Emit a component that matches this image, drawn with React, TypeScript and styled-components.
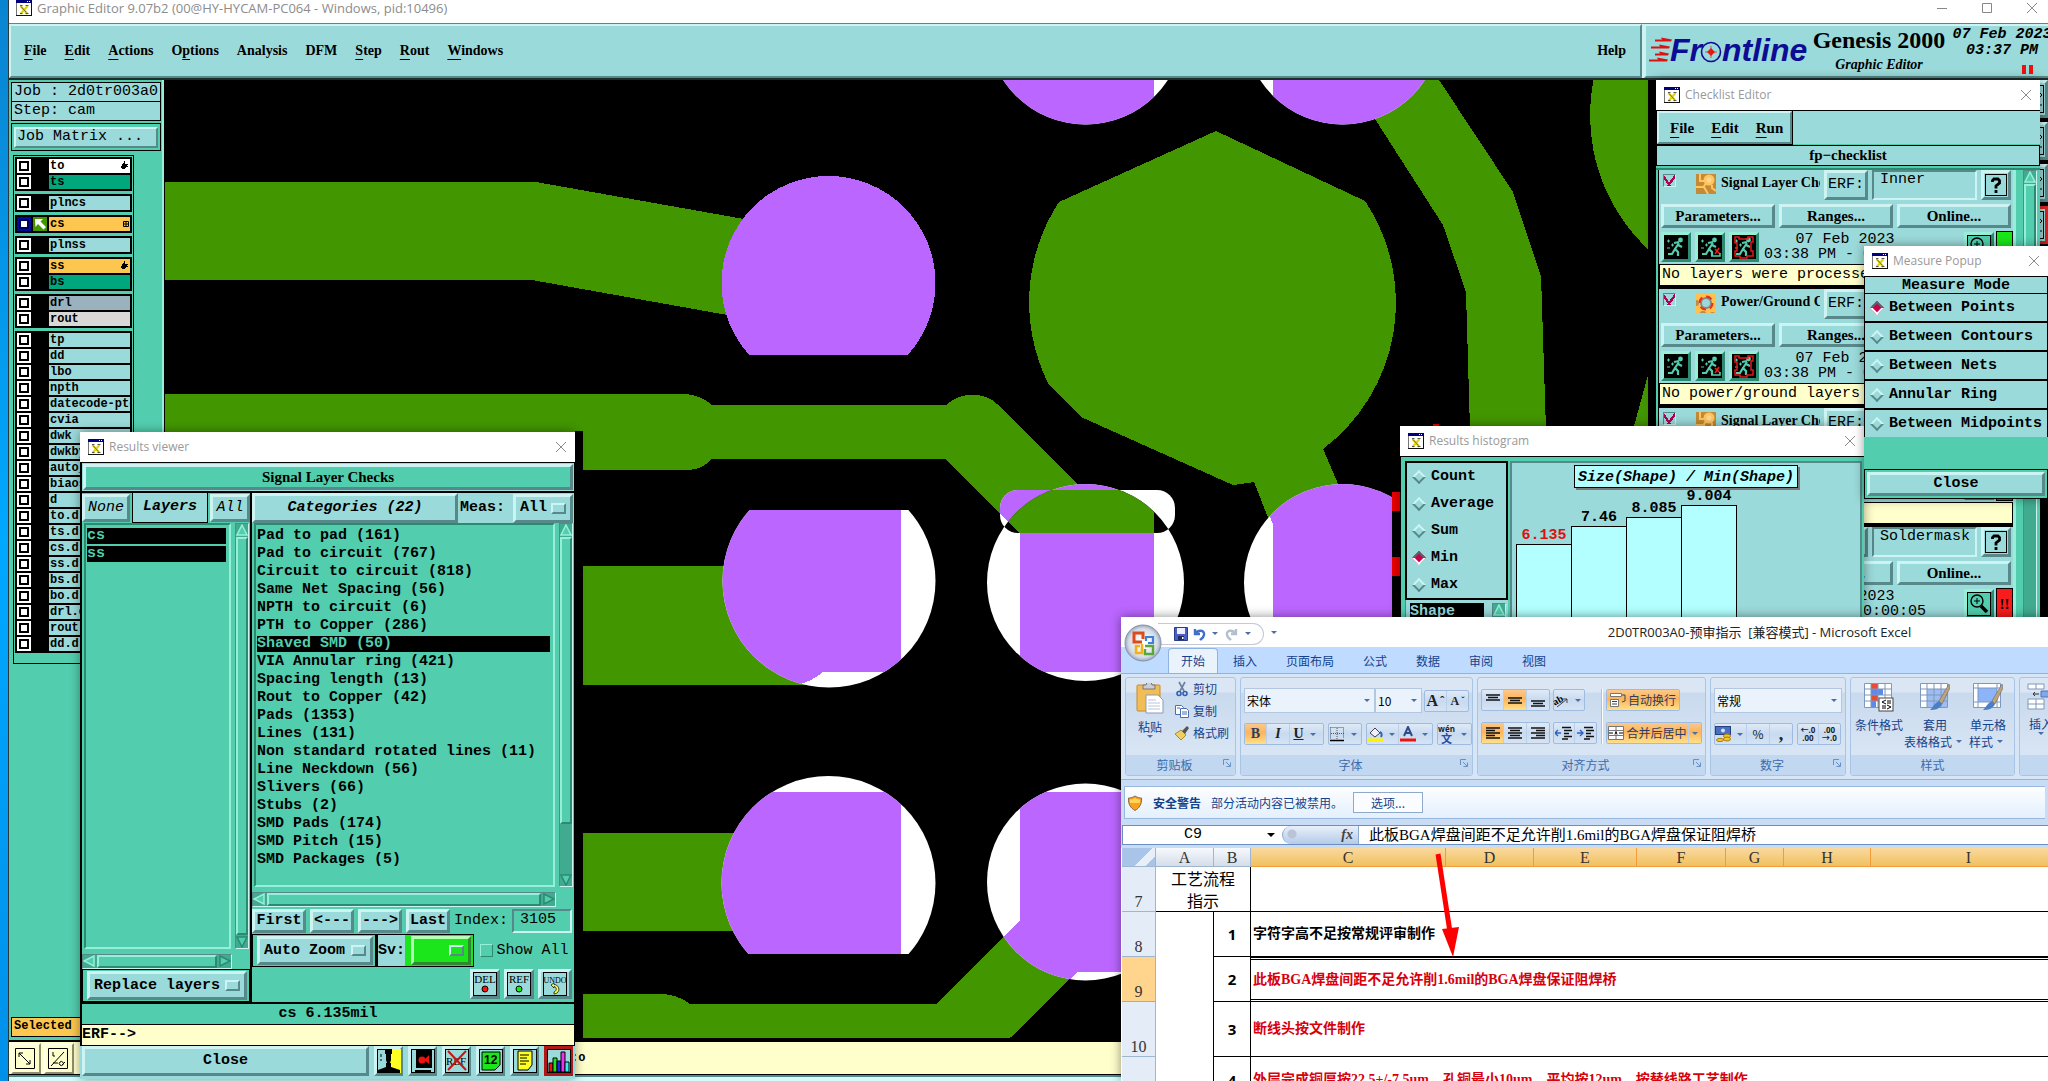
import React from 'react';
import styled, { createGlobalStyle, css } from 'styled-components';

const C = {
  aqua: '#9bdada',
  aquaLight: '#cdf4f2',
  aquaDark: '#57888a',
  mint: '#52ceae',
  mintLight: '#97efd8',
  mintDark: '#2c8a70',
  cream: '#ffffcc',
  trace: '#429600',
  pad: '#bb66ff',
  orange: '#fdc64e',
};
const mono = '"Liberation Mono", "DejaVu Sans Mono", monospace';
const serif = '"Liberation Serif", "Noto Sans CJK SC", serif';
const ui = '"Open Sans", "Noto Sans CJK SC", sans-serif';
const cjk = '"Noto Sans CJK SC", sans-serif';

const Global = createGlobalStyle`
  * { box-sizing: border-box; }
  html, body { margin: 0; height: 100%; overflow: hidden; }
  button, input, select { margin: 0; padding: 0; border-radius: 0; color: inherit; font: inherit; }
  input, select { appearance: none; outline: none; }
  svg { display: block; flex: none; }
`;

const raised = css<{ $mint?: boolean }>`
  border: 3px solid;
  border-color: ${p => (p.$mint ? `${C.mintLight} ${C.mintDark} ${C.mintDark} ${C.mintLight}` : `${C.aquaLight} ${C.aquaDark} ${C.aquaDark} ${C.aquaLight}`)};
  background: ${p => (p.$mint ? C.mint : C.aqua)};
`;
const sunken = css<{ $mint?: boolean }>`
  border: 3px solid;
  border-color: ${p => (p.$mint ? `${C.mintDark} ${C.mintLight} ${C.mintLight} ${C.mintDark}` : `${C.aquaDark} ${C.aquaLight} ${C.aquaLight} ${C.aquaDark}`)};
  background: ${p => (p.$mint ? C.mint : C.aqua)};
`;

/* ---------- desktop and main window ---------- */
const Desktop = styled.div`
  position: relative;
  height: 100vh;
  padding-left: 8px;
  overflow: hidden;
  background: linear-gradient(#0a84d0, #00a8ff 50%, #0090ea);
  color: #000;
`;
const MainWindow = styled.main`
  height: 100%;
  display: flex;
  flex-direction: column;
  background: #fff;
  border-left: 1px solid #2a3a3a;
`;
const MainTitle = styled.header`
  height: 24px;
  padding: 0 10px 7px 7px;
  display: flex;
  align-items: center;
  gap: 5px;
  font: 13px/16px ${ui};
  color: #8c8c8c;
  border-bottom: 1px solid ${C.aquaDark};
`;
const Spacer = styled.span`flex: 1;`;
const WinControls = styled.div`display: flex; gap: 33px;`;
const WinButton = styled.button`
  width: 12px;
  height: 14px;
  border: 0;
  background: none;
  display: flex;
  align-items: center;
  justify-content: center;
`;
const TopRow = styled.div`
  height: 56px;
  display: flex;
  gap: 2px;
  background: ${C.aquaLight};
  border-bottom: 2px solid #1c2c2c;
`;
const MenuBar = styled.nav`
  flex: 1;
  padding: 0 14px 0 13px;
  display: flex;
  align-items: center;
  gap: 18px;
  ${raised}
  border-width: 2px;
`;
const MenuItem = styled.button<{ $large?: boolean }>`
  border: 0;
  background: none;
  font: bold ${p => (p.$large ? 15 : 14)}px/16px ${serif};
  u { text-decoration: underline; text-underline-offset: 4px; text-decoration-thickness: 1px; }
`;
const Brand = styled.section`
  width: 404px;
  display: flex;
  overflow: hidden;
  ${raised}
  border-width: 2px 0 2px 2px;
  padding: 1px 0 0 2px;
  white-space: nowrap;
`;
const Product = styled.div`
  width: 138px;
  flex: none;
  margin: 0 4px 0 0;
  text-align: center;
  h1 { margin: 0; font: bold 24px/26px ${serif}; }
  p { margin: 4px 0 0; font: italic bold 14px/16px ${serif}; }
`;
const Clock = styled.div`
  width: 100px;
  flex: none;
  font: italic bold 15px/16px ${mono};
  text-align: center;
  svg { margin: 6px 0 0 70px; }
`;
const Work = styled.div`flex: 1; min-height: 0; display: flex; background: #000;`;
const Sidebar = styled.aside`
  width: 155px;
  background: ${C.mint};
  border-right: 2px solid ${C.mintLight};
  display: flex;
  flex-direction: column;
  align-items: flex-start;
  padding: 2px 1px 3px 2px;
`;
const JobLine = styled.div`
  width: 150px;
  height: 20px;
  margin-bottom: -1px;
  border: 1px solid #000;
  background: ${C.aqua};
  padding-left: 2px;
  font: 15px/18px ${mono};
  white-space: pre;
  overflow: hidden;
`;
const MatrixBox = styled.div`
  width: 150px;
  margin: 3px 0 4px;
  padding: 2px;
  border: 1px solid #000;
`;
const MatrixButton = styled.button`
  ${raised}
  border-width: 2px;
  width: 100%;
  height: 21px;
  text-align: left;
  padding-left: 1px;
  font: 15px/16px ${mono};
`;
const LayerPanel = styled.div`
  width: 121px;
  margin-left: 2px;
  padding: 1px 1px 10px;
  border: 1px solid #000;
  display: flex;
  flex-direction: column;
  gap: 3px;
`;
const LayerGroup = styled.div`background: #000; padding: 1px 1px 1px 2px;`;
const LayerRow = styled.label<{ $color: string }>`
  height: 16px;
  padding: 1px 1px 1px 0;
  display: flex;
  gap: 2px;
  font: bold 12px/14px ${mono};
  span {
    flex: 1;
    display: flex;
    align-items: center;
    padding: 0 0 0 1px;
    overflow: hidden;
    white-space: nowrap;
    background: ${p => p.$color};
  }
  svg { margin-left: auto; margin-right: 1px; }
`;
const LayerCheck = styled.input<{ $active?: boolean }>`
  flex: none;
  width: 14px;
  height: 14px;
  border: 2px solid ${p => (p.$active ? '#000a9c' : '#fff')};
  background: #fff;
  box-shadow: inset 0 0 0 2px ${p => (p.$active ? '#00055c' : '#000')};
`;
const LayerSwatch = styled.i<{ $active?: boolean }>`
  flex: none;
  width: 14px;
  background: ${p => (p.$active ? C.trace : '#000')};
`;
const Selected = styled.div`
  margin-top: auto;
  width: 150px;
  height: 20px;
  padding-left: 2px;
  border: 1px solid #000;
  background: ${C.orange};
  font: bold 12px/17px ${mono};
`;
const Canvas = styled.div`
  flex: 1;
  background: #000;
  overflow: hidden;
  svg { width: 100%; height: 100%; }
`;
const ToolStrip = styled.aside`
  width: 400px;
  display: flex;
  flex-direction: column;
  align-items: flex-end;
  gap: 4px;
  background: #000;
`;
const StripButton = styled.button<{ $alert?: boolean }>`
  ${raised}
  width: 34px;
  height: 38px;
  display: flex;
  align-items: center;
  justify-content: center;
  ${p => p.$alert && css`border-color: #d22;`}
`;
const CommandBar = styled.footer`
  height: 35px;
  display: flex;
  align-items: center;
  gap: 3px;
  padding-left: 2px;
  border: solid #000;
  border-width: 2px 0 1px;
  background: ${C.cream};
  font: bold 12px/14px ${mono};
`;
const CommandText = styled.span`padding-left: 494px;`;
const StatusBar = styled.div`height: 6px; background: #d3fbfb; border-top: 2px solid ${C.aquaDark};`;
const CornerButton = styled.button`
  width: 30px;
  height: 31px;
  padding: 2px;
  border: 2px solid;
  border-color: #fffff0 #8d8d70 #8d8d70 #fffff0;
  background: ${C.cream};
`;

/* ---------- floating windows ---------- */
const Floating = styled.section<{ $x: number; $y: number; $w: number; $z?: number }>`
  position: absolute;
  left: ${p => p.$x}px;
  top: ${p => p.$y}px;
  width: ${p => p.$w}px;
  z-index: ${p => p.$z || 1};
  background: ${C.mint};
  box-shadow: 0 0 10px rgba(0, 0, 0, 0.4);
`;
const FloatTitle = styled.header`
  height: 31px;
  padding: 0 8px 0 8px;
  display: flex;
  align-items: center;
  gap: 5px;
  background: #fff;
  border-bottom: 1px solid #000;
  font: 12px/16px ${ui};
  color: #999;
  h2 { margin: 0; flex: 1; font: inherit; }
`;
const MotifButton = styled.button<{ $mint?: boolean; $w?: number; $h?: number; $look?: string }>`
  ${raised}
  flex: ${p => (p.$w ? 'none' : '1 1 0')};
  ${p => p.$w && css`width: ${p.$w}px;`}
  height: ${p => p.$h || 24}px;
  display: flex;
  align-items: center;
  justify-content: center;
  font: ${p => p.$look || 'bold'} 15px/16px ${mono};
  white-space: nowrap;
`;
const SerifButton = styled(MotifButton)`font: bold 15px/16px ${serif};`;
const Row = styled.div<{ $gap?: number; $h?: number }>`
  display: flex;
  align-items: center;
  gap: ${p => p.$gap || 0}px;
  ${p => p.$h && css`height: ${p.$h}px;`}
`;
const KeyRow = styled(Row)`padding-right: 2px;`;

const Viewer = styled.div`padding: 0 1px 0 2px; background: #000;`;
const ViewerTitle = styled.div`
  height: 28px;
  padding: 1px;
  background: ${C.aqua};
  > div {
    height: 26px;
    ${raised}
    font: bold 15px/20px ${serif};
    text-align: center;
    background: ${C.mint};
  }
`;
const Panes = styled.div`
  display: grid;
  grid-template-columns: 168px 1fr;
  gap: 2px;
  padding: 2px 0;
`;
const Pane = styled.div`background: ${C.mint}; display: flex; flex-direction: column;`;
const PaneHead = styled.div`
  height: 30px;
  display: flex;
  align-items: center;
  background: ${C.mint};
  font: bold 15px/18px ${mono};
`;
const LayersLabel = styled.div`
  flex: 1;
  height: 30px;
  margin: 0 2px;
  border: solid #000;
  border-width: 0 1px 1px;
  background: ${C.aqua};
  font: italic bold 15px/28px ${mono};
  text-align: center;
`;
const MeasLabel = styled.label`
  height: 30px;
  display: flex;
  align-items: center;
  gap: 8px;
  background: ${C.aqua};
  padding: 0 1px 0 2px;
`;
const ListArea = styled.div`
  display: grid;
  grid-template-columns: 1fr 14px;
  gap: 4px;
  padding: 0 1px 0 2px;
`;
const List = styled.ul<{ $h: number }>`
  margin: 0;
  height: ${p => p.$h}px;
  padding: 3px 3px 0 1px;
  ${sunken}
  border-width: 2px;
  border-color: ${C.mintDark} ${C.mintLight} ${C.mintLight} ${C.mintDark};
  background: ${C.mint};
  list-style: none;
  overflow: hidden;
`;
const Item = styled.li<{ $on?: boolean }>`
  height: 16px;
  margin-bottom: 2px;
  font: bold 15px/16px ${mono};
  ${p => p.$on && css`background: #000; color: ${C.mint};`}
`;
const Scroll = styled.div<{ $horizontal?: boolean; $rest?: number; $aqua?: boolean }>`
  ${sunken}
  border-width: 1px;
  background: #41ab90;
  display: flex;
  flex-direction: ${p => (p.$horizontal ? 'row' : 'column')};
  ${p => p.$horizontal && css`height: 15px; margin: 5px 18px 0 0;`}
  i {
    flex: 1;
    ${p => (p.$horizontal ? 'margin: 0 2px;' : `margin: 1px 0 ${p.$rest || 1}px;`)}
    border: 2px solid;
    border-color: ${C.mintLight} ${C.mintDark} ${C.mintDark} ${C.mintLight};
    background: ${p => (p.$aqua ? C.aqua : C.mint)};
  }
`;
const SelectFrame = styled.label<{ $w?: number; $h?: number; $green?: boolean }>`
  ${raised}
  ${p => p.$w && css`width: ${p.$w}px;`}
  height: ${p => p.$h || 29}px;
  display: flex;
  align-items: center;
  ${p => p.$green && css`background: #1be61b; border-color: #b6ffb6 #2c8a30 #2c8a30 #b6ffb6;`}
  select {
    flex: 1;
    min-width: 0;
    border: 0;
    background: none;
    padding-left: 4px;
    font: bold 15px/18px ${mono};
  }
  &::after {
    content: '';
    width: 11px;
    height: 7px;
    margin-right: 4px;
    border: 2px solid;
    border-color: ${C.aquaLight} ${C.aquaDark} ${C.aquaDark} ${C.aquaLight};
  }
`;
const Framed = styled.div<{ $green?: boolean }>`
  display: flex;
  align-items: center;
  height: 33px;
  border: 1px solid #000;
  padding: 0 2px 0 4px;
  ${p => p.$green && css`border-left-width: 2px; padding: 0 2px 0 0; background: #1be61b;`}
`;
const SvLabel = styled.span`
  height: 31px;
  background: ${C.aqua};
  margin-right: 6px;
  font: bold 15px/31px ${mono};
`;
const IndexInput = styled.input`
  ${sunken}
  border-width: 2px;
  background: ${C.mint};
  width: 60px;
  height: 24px;
  padding: 0 0 3px 6px;
  font: 15px/18px ${mono};
`;
const TextLabel = styled.label`
  display: flex;
  align-items: center;
  gap: 4px;
  font: 15px/18px ${mono};
`;
const SmallCheck = styled.input`
  width: 13px;
  height: 13px;
  border: 1px solid;
  border-color: ${C.mintLight} ${C.mintDark} ${C.mintDark} ${C.mintLight};
  background: ${C.mint};
`;
const IconKey = styled.button<{ $mint?: boolean; $alert?: boolean; $w?: number }>`
  ${raised}
  width: ${p => p.$w || 30}px;
  height: 30px;
  flex: none;
  display: flex;
  align-items: center;
  justify-content: center;
  ${p => p.$alert && css`border-color: #b01818;`}
`;
const StatusLine = styled.div`
  height: 20px;
  margin-bottom: 1px;
  background: ${C.mint};
  text-align: center;
  font: bold 15px/20px ${mono};
`;
const Prompt = styled.div`
  height: 20px;
  background: ${C.cream};
  font: bold 15px/20px ${mono};
`;
const ViewerFoot = styled.div`
  display: flex;
  align-items: center;
  gap: 5px;
  padding: 0 2px 3px;
  margin: 1px -1px 0 -2px;
  background: ${C.aqua};
`;

/* ---------- checklist ---------- */
const CheckMenu = styled.div`
  background: ${C.aqua};
  nav {
    ${raised}
    border-width: 2px;
    outline: 1px solid #000;
    width: 135px;
    height: 33px;
    margin-left: 1px;
    padding-left: 11px;
    display: flex;
    align-items: center;
    gap: 17px;
  }
`;
const CheckName = styled.div`
  height: 21px;
  margin: 1px 0 0;
  border: 1px solid #000;
  background: ${C.aqua};
  text-align: center;
  font: bold 15px/18px ${serif};
`;
const CheckBody = styled.div`
  display: grid;
  grid-template-columns: minmax(0, 1fr) 14px;
  gap: 7px;
  height: 470px;
  margin-top: 2px;
  padding: 0 3px 0 2px;
  border-top: 2px solid ${C.mintDark};
  overflow: hidden;
`;
const Checks = styled.div`
  height: 480px;
  border-right: 3px solid ${C.mintLight};
  background: #000;
  padding-left: 1px;
`;
const Check = styled.article`
  height: 116px;
  margin-bottom: 3px;
  padding: 0 2px 0 2px;
  background: ${C.aqua};
`;
const CheckHead = styled.div`display: flex; height: 30px; gap: 4px; padding-left: 2px;`;
const CheckLabel = styled.label`
  flex: 1 1 0;
  min-width: 0;
  display: flex;
  align-items: flex-start;
  padding-top: 4px;
  font: bold 14px/18px ${serif};
  white-space: nowrap;
  overflow: hidden;
  svg { margin: 0 5px 0 20px; }
`;
const Tick = styled.input`
  flex: none;
  width: 13px;
  height: 13px;
  border: 1px solid;
  border-color: ${C.aquaDark} ${C.aquaLight} ${C.aquaLight} ${C.aquaDark};
  background: linear-gradient(125deg, transparent 55%, #b0004e 55% 70%, transparent 70%), linear-gradient(55deg, transparent 25%, #b0004e 25% 40%, transparent 40%);
`;
const CheckInput = styled.input`
  ${sunken}
  border-width: 2px;
  width: 105px;
  flex: none;
  padding: 0 0 10px 6px;
  font: 15px/16px ${mono};
`;
const CheckTime = styled.div`
  flex: none;
  width: 164px;
  text-align: center;
  font: 15px/15px ${mono};
  white-space: nowrap;
`;
const Flag = styled.span<{ $bad?: boolean }>`
  width: 17px;
  flex: none;
  height: 32px;
  margin: 0 -2px;
  border: 1px solid #000;
  background: ${p => (p.$bad ? '#f91c1c' : '#19e619')};
  text-align: center;
  font: bold 15px/30px ${serif};
`;
const Message = styled.div`
  margin: 1px -2px 0;
  height: 22px;
  border: 1px solid #000;
  padding-left: 2px;
  background: ${C.cream};
  font: 15px/19px ${mono};
  white-space: nowrap;
  overflow: hidden;
`;

/* ---------- measure popup, histogram ---------- */
const Modes = styled.div`padding: 0 1px; background: #000;`;
const ModeTitle = styled.div`
  height: 16px;
  margin-bottom: 1px;
  background: ${C.aqua};
  text-align: center;
  font: bold 15px/17px ${mono};
`;
const Radio = styled.label<{ $h: number; $line?: boolean }>`
  height: ${p => p.$h}px;
  display: flex;
  align-items: center;
  gap: 7px;
  padding-left: 7px;
  font: bold 15px/18px ${mono};
  white-space: nowrap;
  ${p => p.$line && css`background: ${C.aqua}; margin-bottom: 2px;`}
`;
const Diamond = styled.input`
  width: 10px;
  height: 10px;
  flex: none;
  transform: rotate(45deg);
  border: 2px solid;
  border-color: ${C.aquaLight} ${C.aquaDark} ${C.aquaDark} ${C.aquaLight};
  background: ${C.aqua};
  &:checked { background: #c8004c; border-color: #566 #fff #fff #566; }
`;
const MeasureFoot = styled.div`
  margin-top: 32px;
  padding: 2px;
  border: 1px solid #000;
  display: flex;
`;
const HistBody = styled.div`
  display: grid;
  grid-template-columns: 103px 1fr;
  gap: 2px;
  padding: 4px 2px 4px 4px;
  border-left: 1px solid #000;
`;
const HistModes = styled.fieldset`
  margin: 0;
  padding: 0;
  border: 2px solid #000;
  background: ${C.aqua};
`;
const ShapeList = styled.div`
  display: grid;
  grid-template-columns: 1fr 14px;
  gap: 8px;
  height: 40px;
  padding: 3px 2px 0 4px;
  background: ${C.aqua};
  border-left: 1px solid ${C.aquaDark};
  b { height: 18px; background: #000; color: ${C.aqua}; font: bold 15px/18px ${mono}; }
`;
const Chart = styled.div`
  border: 2px solid ${C.aquaDark};
  background: ${C.aqua};
  display: flex;
  flex-direction: column;
  padding: 2px 4px 0;
`;
const ChartTitle = styled.div`
  align-self: center;
  height: 23px;
  padding: 0 3px;
  border: 1px solid #000;
  background: #b3ffff;
  box-shadow: 2px 2px 0 #777;
  font: italic bold 15px/24px ${mono};
`;
const Bars = styled.div`
  display: flex;
  align-items: flex-end;
`;
const Bar = styled.div<{ $low?: boolean }>`
  width: 56px;
  margin-right: -1px;
  text-align: center;
  font: bold 15px/17px ${mono};
  color: ${p => (p.$low ? '#e01010' : '#000')};
  i { display: block; border: 1px solid #000; background: #b3ffff; }
`;

/* ---------- spreadsheet ---------- */
const Excel = styled.section`
  position: absolute;
  z-index: 5;
  left: 1121px;
  right: 0;
  top: 617px;
  bottom: 0;
  display: flex;
  flex-direction: column;
  overflow: hidden;
  background: #c9dcf5;
  color: #15428b;
  font: 12px/16px ${cjk};
  box-shadow: 0 0 10px rgba(0, 0, 0, 0.45);
`;
const ExcelTitle = styled.header`
  height: 30px;
  flex: none;
  display: flex;
  align-items: center;
  background: #fff;
  color: #222;
  font: 13px/18px ${ui};
  h2 { flex: 1; margin: 0; padding-left: 190px; text-align: center; font: inherit; white-space: pre; }
`;
const Orb = styled.button`
  position: absolute;
  left: 3px;
  top: 7px;
  padding: 0;
  border: 0;
  background: none;
`;
const Quick = styled.div`
  height: 22px;
  width: 106px;
  margin: 3px 3px 0 37px;
  padding: 0 8px 0 15px;
  border: 1px solid #c4c9d2;
  border-left: 0;
  border-radius: 0 11px 11px 0;
  display: flex;
  align-items: center;
  justify-content: space-between;
`;
const Tabs = styled.nav`
  height: 26px;
  flex: none;
  padding-left: 47px;
  display: flex;
  align-items: flex-end;
  background: #bfdbff;
`;
const Tab = styled.button<{ $on?: boolean }>`
  height: 25px;
  padding: 0 ${p => (p.$on ? 12 : 13)}px;
  margin-right: 1px;
  border: 1px solid transparent;
  border-bottom: 0;
  color: #15428b;
  background: none;
  ${p => p.$on && css`background: #eaf3fc; border-color: #8db2e3; border-radius: 4px 4px 0 0;`}
`;
const Ribbon = styled.div`
  height: 107px;
  flex: none;
  padding: 3px 4px;
  display: flex;
  gap: 4px;
  background: #d7e6f6;
  border: solid #8db2e3;
  border-width: 1px 0;
  border-bottom-color: #7fc0d8;
`;
const Group = styled.section<{ $w: number }>`
  width: ${p => p.$w}px;
  flex: none;
  display: flex;
  flex-direction: column;
  border: 1px solid #a9c4e4;
  border-radius: 3px;
  background: linear-gradient(#dbe6f4 0 14%, #c9daee 16%, #dde9f6);
  overflow: hidden;
`;
const GroupBody = styled.div<{ $column?: boolean; $gap?: number }>`
  flex: 1;
  min-height: 0;
  padding: 0 3px;
  display: flex;
  flex-direction: ${p => (p.$column ? 'column' : 'row')};
  justify-content: ${p => (p.$column ? 'center' : 'flex-start')};
  gap: ${p => p.$gap || 0}px;
`;
const Stack = styled.div`
  display: flex;
  flex-direction: column;
  justify-content: center;
  gap: 11px;
`;
const GroupLabel = styled.footer`
  height: 20px;
  display: flex;
  align-items: center;
  background: #c1d8f0;
  color: #3e6aaa;
  span { flex: 1; text-align: center; }
  svg { margin: 0 4px 4px 0; }
`;
const BigButton = styled.button<{ $w: number }>`
  width: ${p => p.$w}px;
  flex: none;
  display: flex;
  flex-direction: column;
  align-items: center;
  padding-top: 5px;
  border: 0;
  background: none;
  color: #15428b;
  line-height: 17px;
  white-space: nowrap;
  svg { margin-bottom: 4px; }
`;
const Lines = styled.div`
  display: flex;
  flex-direction: column;
`;
const LineButton = styled.button`
  height: 22px;
  display: flex;
  align-items: center;
  gap: 3px;
  border: 0;
  background: none;
  color: #15428b;
`;
const Combo = styled.label<{ $w: number }>`
  width: ${p => p.$w}px;
  height: 25px;
  flex: none;
  display: flex;
  align-items: center;
  border: 1px solid #b3c7e1;
  background: #eaf2fb;
  color: #000;
  select { flex: 1; min-width: 0; border: 0; padding-left: 2px; background: none; }
`;
const Cluster = styled.div`
  height: 22px;
  display: flex;
  border: 1px solid #9ebbe0;
  border-radius: 2px;
  background: linear-gradient(#dfeaf7, #c8daf0 50%, #d5e3f4);
`;
const Tool = styled.button<{ $w: number; $on?: boolean; $face?: string }>`
  width: ${p => p.$w}px;
  display: flex;
  align-items: center;
  justify-content: center;
  gap: 2px;
  border: 0;
  border-right: 1px solid #b9cfea;
  background: ${p => (p.$on ? 'linear-gradient(#fcc88b, #fbb45c 45%, #ffe08a)' : 'none')};
  color: ${p => (p.$on ? '#2f3c60' : '#222')};
  font: ${p => p.$face || `12px/16px ${cjk}`};
  white-space: nowrap;
  &:last-child { border-right: 0; }
`;
const Divider = styled.i`width: 2px; height: 55px; margin: 0 3px 0 4px; background: #fff; border-left: 1px solid #a9c4e4;`;
const Caret = styled.i<{ $dark?: boolean }>`
  flex: none;
  margin: 0 4px;
  border: ${p => (p.$dark ? 4 : 3)}px solid transparent;
  border-top-color: ${p => (p.$dark ? '#000' : '#4a6fa8')};
  border-bottom: 0;
`;
const Security = styled.div`
  height: 33px;
  flex: none;
  margin: 6px 3px 6px;
  padding: 0 2px;
  display: flex;
  align-items: center;
  gap: 10px;
  border: 1px solid #9ab8dc;
  border-right: 0;
  background: linear-gradient(#fdfeff, #e3f0fd);
  button { width: 70px; height: 21px; border: 1px solid #8fa9cc; background: #fafcff; color: #15428b; }
`;
const Formula = styled.div`
  height: 20px;
  flex: none;
  margin: 0 0 3px 1px;
  display: flex;
  border: solid #6b8fc0;
  border-width: 1px 0 1px 1px;
  background: #fff;
  color: #000;
  font: 15px/18px ${serif};
  label { width: 159px; display: flex; align-items: center; }
  label input { width: 140px; border: 0; background: none; text-align: center; font: 15px/18px ${mono}; }
`;
const FxPill = styled.div`
  width: 77px;
  border-radius: 9px 0 0 9px;
  border: 1px solid #8da9cf;
  border-width: 0 1px;
  background: radial-gradient(circle at 9px 8px, #b9c4d6 0 4px, transparent 5px), linear-gradient(#e8f0fa, #b4cbe8);
  padding-right: 5px;
  text-align: right;
  font: italic bold 14px/17px ${serif};
  color: #444;
`;
const FormulaInput = styled.input`flex: 1; border: 0; padding-left: 10px; background: #fff;`;
const SheetArea = styled.div`flex: 1; min-height: 0; overflow: hidden; position: relative; padding-left: 1px; background: #fff;`;
const Sheet = styled.table`
  width: 945px;
  table-layout: fixed;
  border-collapse: separate;
  border-spacing: 0;
  color: #000;
  th, td { padding: 0; overflow: hidden; }
`;
const ColHead = styled.th<{ $w: number; $on?: boolean; $corner?: boolean }>`
  width: ${p => p.$w}px;
  height: 19px;
  font: 16px/17px ${serif};
  border-right: 1px solid ${p => (p.$on ? '#f29b3a' : '#9eb6ce')};
  border-bottom: 1px solid ${p => (p.$on ? '#f29b3a' : '#9eb6ce')};
  background: ${p => (p.$corner ? 'linear-gradient(135deg, #a9c4e9 60%, #e6effa 60% 82%, #a9c4e9 82%)' : p.$on ? 'linear-gradient(#f9d99f, #f1c15f)' : 'linear-gradient(#f6f9fd, #d5dde9)')};
  color: #333;
`;
const RowHead = styled.th<{ $h: number; $on?: boolean }>`
  height: ${p => p.$h}px;
  vertical-align: bottom;
  font: 16px/18px ${serif};
  border-right: 1px solid #9eb6ce;
  border-bottom: 1px solid ${p => (p.$on ? '#f29b3a' : '#9eb6ce')};
  background: ${p => (p.$on ? '#ffd58d' : '#e4ecf7')};
  color: #333;
`;
const Cell = styled.td<{ $red?: boolean; $active?: boolean; $kind?: 'head' | 'num' | 'text' }>`
  border-right: 1px solid #000;
  border-bottom: 1px solid #000;
  background: #fff;
  color: ${p => (p.$red ? '#d8000c' : '#000')};
  white-space: nowrap;
  ${p => p.$kind === 'head' && css`text-align: center; font: 16px/22px ${cjk}; vertical-align: bottom; white-space: pre-line;`}
  ${p => p.$kind === 'num' && css`text-align: center; font: bold 15px/18px ${ui};`}
  ${p => p.$kind === 'text' && css`font: bold 14px/18px ${serif}; && { padding-left: 2px; }`}
  ${p => p.$active && css`border-top: 3px double #000; border-bottom: 3px double #000;`}
`;
const RedArrow = styled.svg`position: absolute; left: 312px; top: 4px;`;
const Pinyin = styled.span`
  display: flex;
  flex-direction: column;
  align-items: center;
  font: bold 8px/8px ${ui};
  b { font: bold 11px/10px ${cjk}; color: #2d4ba6; }
`;

/* ---------- drawings ---------- */
const AppIcon = () => (
  <svg width="16" height="16" viewBox="0 0 16 16">
    <rect x="0.5" y="0.5" width="15" height="15" fill="#fff" stroke="#777" />
    <rect width="16" height="3" fill="#00007c" />
    <path d="M11 1.5h1M13 1.5h1" stroke="#fff" />
    <path d="M4.500 6l7 8M11.500 6l-7 8" stroke="#e3d400" strokeWidth="2" />
    <path d="M4 5.500h2.500M9.500 5.500h3M4 13.500h2.500M9.500 13.500h3" stroke="#333" strokeWidth="0.800" />
    <path d="M5 6.500l5.500 6" stroke="#444" strokeWidth="0.700" />
    <path d="M0 15.500h16M15.500 3v13" stroke="#111" />
  </svg>
);
const Cross = () => (
  <svg width="12" height="12" viewBox="0 0 12 12"><path d="M1 1l10 10M11 1L1 11" stroke="#8a8a8a" fill="none" /></svg>
);
const Tri = ({ dir }: { dir: 'u' | 'd' | 'l' | 'r' }) => {
  const d = { u: 'M6 1L11 11H1z', d: 'M6 11L1 1H11z', l: 'M1 6L11 1V11z', r: 'M11 6L1 1V11z' }[dir];
  return <svg width="12" height="12" viewBox="0 0 12 12"><path d={d} fill={C.mint} stroke={dir === 'u' || dir === 'l' ? C.mintLight : C.mintDark} strokeWidth="1.500" /></svg>;
};
const VScroll = ({ rest, aqua }: { rest?: number; aqua?: boolean }) => (
  <Scroll $rest={rest} $aqua={aqua}><Tri dir="u" /><i /><Tri dir="d" /></Scroll>
);
const HScroll = () => <Scroll $horizontal><Tri dir="l" /><i /><Tri dir="r" /></Scroll>;
const Hand = () => (
  <svg width="9" height="9" viewBox="0 0 9 9"><path d="M4 0h1v3h3v1H7v1h1v1H6v1H5v1H2V7H1V5h1V3h1V2h1z" fill="#000" /></svg>
);
const GridMark = () => (
  <svg width="6" height="6" viewBox="0 0 6 6"><path d="M0.500 0.500h5v5h-5zM3 0v6M0 3h6" fill="none" stroke="#000" /></svg>
);
const Cursor = () => (
  <svg width="14" height="14" viewBox="0 0 14 14"><path d="M2 2h8L7.500 4.500L13 10l-2.500 2.500L5 7L2.500 10z" fill="#fff" /></svg>
);
const Runner = ({ kind }: { kind: number }) => (
  <svg width="24" height="24" viewBox="0 0 24 24">
    <rect width="24" height="24" fill="#000" />
    <circle cx="16.500" cy="5" r="2.400" fill={C.mint} />
    <path d="M15 7L10 8M15 8L11 14L14 17V21M11 14L8 19H4M14 10L18 12" stroke={C.mint} strokeWidth="2.200" fill="none" />
    <path d="M3 6h3M4.500 4.500v3M7 10h3M8.500 8.500v3M3 13h3" stroke={C.mint} />
    {kind === 1 && <g><path d="M17 14l5 5M21 13l-4 6" stroke="#e21" strokeWidth="1.500" /><path d="M13 21h9v-3" stroke={C.mint} strokeWidth="1.500" fill="none" /></g>}
    {kind === 2 && <path d="M3 2h4v2h9V2h5v5h-2v9h2v5h-6v2H8v-2H3v-5h2V8H3z" stroke="#e21818" fill="none" strokeWidth="1.500" />}
  </svg>
);
const Magnifier = () => (
  <svg width="24" height="24" viewBox="0 0 24 24">
    <rect x="0.500" y="0.500" width="23" height="23" fill={C.mint} stroke="#000" />
    <circle cx="10" cy="9" r="6" fill="none" stroke="#000" strokeWidth="1.400" />
    <path d="M7 9h6M10 6v6" stroke="#000" /><path d="M14 14l6 6" stroke="#000" strokeWidth="3.500" />
  </svg>
);
const Question = () => (
  <svg width="22" height="22" viewBox="0 0 22 22">
    <rect x="0.500" y="0.500" width="21" height="21" fill="none" stroke="#000" />
    <path d="M7.500 8V6.500L9 5H13L14.500 6.500V9L11 12V14.500M11 16v3" fill="none" stroke="#000" strokeWidth="2.800" />
  </svg>
);
const CheckIcon = ({ ground }: { ground?: boolean }) => (
  <svg width="20" height="20" viewBox="0 0 20 20">
    <rect width="20" height="20" fill={ground ? '#ffc04d' : '#c48a35'} />
    {ground ? (
      <g><circle cx="10" cy="10" r="5" fill={C.aqua} stroke="#888" strokeWidth="2" /><circle cx="10" cy="10" r="6.500" fill="none" stroke="#e8301a" strokeWidth="2" strokeDasharray="6 4" /><path d="M0 7a3 3 0 010 6M4 20a3 2 0 016 0M14 20a3 2 0 015 0" fill="#b98c50" /></g>
    ) : (
      <g fill="none" stroke="#ffc561" strokeWidth="3"><circle cx="13" cy="6" r="4" fill="#ffd98f" /><path d="M4 0v7h5M0 13h8l4 7M10 9l-3 5M16 11v3l4 3" strokeWidth="2" /></g>
    )}
  </svg>
);
const Frontline = () => (
  <svg width="162" height="48" viewBox="0 0 162 48" role="img" aria-label="Frontline">
    <g fill="#dd1212">
      <path d="M7 12.500h7l-1-2 11 2-1 2H7zM3 19.500h9l-1-2 11 2-1 2H3zM7 26.500h5l-1-2 10 2-1 2H7zM1 32.500h9l-1-2 11 2-1 2H1z" />
    </g>
    <g fill="#0c0c94" style={{ font: 'italic bold 32px "Liberation Sans", sans-serif' }}>
      <text x="22" y="34">Fr</text>
      <text x="74" y="34">ntline</text>
    </g>
    <circle cx="63" cy="25" r="9.500" fill={C.aqua} stroke="#0c0c94" strokeWidth="1.600" />
    <path d="M63 21l4 4-4 4-4-4z" fill="#e51717" /><path d="M57 25h12M63 19v12" stroke="#e51717" strokeWidth="0.700" />
  </svg>
);

const Board = () => (
  <Canvas>
    <svg role="img" aria-label="Board artwork" shapeRendering="crispEdges">
      <defs>
        <clipPath id="p1"><rect x="700" y="160" width="260" height="195" /></clipPath>
        <clipPath id="p2"><rect x="700" y="510" width="260" height="200" /></clipPath>
        <clipPath id="c2"><circle cx="829" cy="581" r="106.500" /></clipPath>
        <clipPath id="p3"><rect x="700" y="770" width="260" height="184" /></clipPath>
        <clipPath id="c3"><circle cx="828.500" cy="883" r="107" /></clipPath>
        <clipPath id="c4"><circle cx="1085.500" cy="582.500" r="98.500" /></clipPath>
        <clipPath id="r4"><rect x="1000" y="490" width="175" height="43" rx="18" /></clipPath>
        <clipPath id="c5"><circle cx="1085.500" cy="882" r="98.500" /></clipPath>
        <clipPath id="c6"><circle cx="1085.500" cy="26" r="98.500" /></clipPath>
        <clipPath id="c7"><circle cx="1342.500" cy="26" r="98.500" /></clipPath>
        <clipPath id="c8"><circle cx="1342.500" cy="582.500" r="98.500" /></clipPath>
      </defs>
      <g transform="translate(-164,-80)">
        <g fill={C.trace}>
          <path d="M165 182H536L800 229V328L532 280H165z" />
          <path d="M165 394H686Q700 395 712 405H946Q958 395 972 394.500Q988 395 997 404L1077 484L1100 533H1020L945 459H712Q702 469 692 469.500H165z" />
          <path d="M583 566H820V684.500H583zM583 833H820V930.500H583z" />
          <path d="M583 994H663Q678 995 690 1004H937L1020 920L1077 972L1010 1038H583z" />
          <path d="M1216 131L1365 201A183 183 0 0 1 1323 449L1339 486L1300 560L1273 530L1254 482L1233 485L1081 417L1048 383A183 183 0 0 1 1059 202z" />
          <path d="M1350 80H1439L1513 192L1541 276L1546 430H1470L1466 292L1443 225z" />
          <circle cx="1774" cy="115" r="184" />
          <path d="M1648 375L1633 430H1648z" />
        </g>
        <circle cx="828.500" cy="283" r="107" fill={C.pad} clipPath="url(#p1)" />
        <g clipPath="url(#p2)"><g clipPath="url(#c2)">
          <rect x="700" y="470" width="260" height="240" fill="#fff" />
          <path d="M700 470H901V672H823Q812 681 798 685H700z" fill={C.pad} />
        </g></g>
        <g clipPath="url(#p3)"><g clipPath="url(#c3)">
          <rect x="700" y="770" width="260" height="240" fill="#fff" />
          <rect x="700" y="792" width="201" height="200" fill={C.pad} />
        </g></g>
        <g clipPath="url(#r4)">
          <rect x="1000" y="490" width="175" height="43" fill="#fff" />
          <path d="M1000 480H1085V533H1020L1000 514z" fill={C.pad} />
        </g>
        <g clipPath="url(#c4)">
          <rect x="980" y="480" width="210" height="205" fill="#fff" />
          <rect x="1040" y="480" width="90" height="10" fill={C.pad} />
          <rect x="1020" y="532" width="134" height="140" fill={C.pad} />
          <g clipPath="url(#r4)">
            <rect x="1000" y="490" width="175" height="43" fill="#000" />
            <path d="M1000 480H1154V533H1020L1000 514z" fill={C.trace} />
          </g>
        </g>
        <g clipPath="url(#c5)">
          <rect x="980" y="780" width="210" height="205" fill="#fff" />
          <path d="M1020 792H1154V972H1077L1060 990L980 960L1020 920z" fill={C.pad} />
        </g>
        <g clipPath="url(#c6)"><rect x="980" y="0" width="210" height="130" fill="#fff" /><rect x="980" y="0" width="174" height="130" fill={C.pad} /></g>
        <g clipPath="url(#c7)"><rect x="1240" y="0" width="210" height="130" fill="#fff" /><rect x="1273" y="0" width="174" height="130" fill={C.pad} /></g>
        <g clipPath="url(#c8)"><rect x="1240" y="480" width="210" height="205" fill="#fff" /><path d="M1273 480H1442V690H1273V524L1254 482z" fill={C.pad} /></g>
        <rect x="575" y="431" width="8" height="620" fill="#000" />
        <rect x="1392" y="486" width="8" height="140" fill="#000" />
        <path d="M1392 492h8v19h-8zM1392 557h8v19h-8zM1433 424h6v2h-6z" fill="#e00" />
      </g>
    </svg>
  </Canvas>
);

/* ---------- data ---------- */
type Layer = { name: string; color?: string; mark?: 'hand' | 'grid'; active?: boolean };
const green = '#00a67c';
const layerGroups: Layer[][] = [
  [{ name: 'to', color: '#fff', mark: 'hand' }, { name: 'ts', color: green }],
  [{ name: 'plncs' }],
  [{ name: 'cs', color: C.orange, mark: 'grid', active: true }],
  [{ name: 'plnss' }],
  [{ name: 'ss', color: C.orange, mark: 'hand' }, { name: 'bs', color: green }],
  [{ name: 'drl', color: '#9ab2bd' }, { name: 'rout', color: '#d8d8d6' }],
  ['tp', 'dd', 'lbo', 'npth', 'datecode-pte', 'cvia', 'dwk', 'dwkby', 'auto_', 'biaos', 'd', 'to.d', 'ts.d', 'cs.d', 'ss.d', 'bs.d', 'bo.d', 'drl.d', 'rout', 'dd.d'].map(name => ({ name })),
];
const categories = ['Pad to pad (161)', 'Pad to circuit (767)', 'Circuit to circuit (818)', 'Same Net Spacing (56)', 'NPTH to circuit (6)', 'PTH to Copper (286)', 'Shaved SMD (50)', 'VIA Annular ring (421)', 'Spacing length (13)', 'Rout to Copper (42)', 'Pads (1353)', 'Lines (131)', 'Non standard rotated lines (11)', 'Line Neckdown (56)', 'Slivers (66)', 'Stubs (2)', 'SMD Pads (174)', 'SMD Pitch (15)', 'SMD Packages (5)'];
const menus: [string, number][] = [['File', 0], ['Edit', 0], ['Actions', 0], ['Options', 1], ['Analysis', -1], ['DFM', -1], ['Step', 0], ['Rout', 0], ['Windows', 0]];
const Hot = ({ text, at }: { text: string; at: number }) => (at < 0 ? <>{text}</> : <>{text.slice(0, at)}<u>{text[at]}</u>{text.slice(at + 1)}</>);

const checks = [
  { name: 'Signal Layer Checks', erf: 'Inner', msg: 'No layers were processed' },
  { name: 'Power/Ground Checks', erf: 'Inner', msg: 'No power/ground layers', ground: true },
  { name: 'Signal Layer Checks', erf: 'Outer', msg: '', bad: true },
  { name: 'Solder Mask Checks', erf: 'Soldermask', msg: '', bad: true },
];
const bars = [['6.135', 98], ['7.46', 116], ['8.085', 125], ['9.004', 137]] as const;
const modes = ['Between Points', 'Between Contours', 'Between Nets', 'Annular Ring', 'Between Midpoints'];
const sample = '此板BGA焊盘间距不足允许削1.6mil的BGA焊盘保证阻焊桥';
const sheetRows = [
  { n: 8, h: 45, k: '1', text: '字符字高不足按常规评审制作' },
  { n: 9, h: 45, k: '2', text: sample, red: true, active: true },
  { n: 10, h: 55, k: '3', text: '断线头按文件制作', red: true },
  { n: 11, h: 46, k: '4', text: '外层完成铜厚按22.5+/-7.5um，孔铜最小10um，平均按12um，按替线路工艺制作', red: true },
];
const columns: [string, number][] = [['A', 58], ['B', 37], ['C', 195], ['D', 88], ['E', 103], ['F', 89], ['G', 58], ['H', 87], ['I', 196]];

/* ---------- small toolbar glyphs ---------- */
const KeyIcon = ({ kind }: { kind: string }) => (
  <svg width="24" height="24" viewBox="0 0 24 24">
    <rect x="0.500" y="0.500" width="23" height="23" fill="none" stroke="#000" />
    {kind === 'man' && <g><rect x="11" width="13" height="24" fill="#ff2" /><path d="M1 24v-3l8-3v-4h1l-1-3V5h5v6l-1 3h1v4l9 3v3z" fill="#000" /><path d="M8 0h7v5H8z" fill="#000" /><path d="M4 5v3M4 10v2" stroke="#000" /></g>}
    {kind === 'stop' && <g><path d="M5 1h16v18H5z" fill="#000" /><circle cx="11" cy="11" r="3.500" fill="#e11" /><path d="M13 11l5-5v9z" fill="#e11" /><path d="M4 22h16" stroke="#000" strokeWidth="2" /></g>}
    {kind === 'noref' && <g><text x="1" y="16" fontFamily="Liberation Serif" fontSize="11">REF</text><path d="M3 2l18 19M21 2L3 21" stroke="#c11" strokeWidth="2" /></g>}
    {kind === 'num' && <g><path d="M3 3h18v13l-5 5H3z" fill="#1be61b" stroke="#000" /><text x="5" y="15" fontFamily="Liberation Sans" fontWeight="bold" fontSize="12">12</text></g>}
    {kind === 'note' && <g><path d="M5 2h14v14l-4 5H5z" fill="#ff2" stroke="#000" /><path d="M7 6h9M7 9h7M7 12h9M7 15h6" stroke="#000" /></g>}
    {kind === 'bars' && <g stroke="#000"><path d="M2 14h4v9H2z" fill="#e11" /><path d="M6 9h4v14H6z" fill="#1be61b" /><path d="M10 12h4v11h-4z" fill="#22e" /><path d="M14 3h4v20h-4z" fill="#e3e" /><path d="M18 13h4v10h-4z" fill="#3ee" /></g>}
    {(kind === 'DEL' || kind === 'REF' || kind === 'UNDO') && <text x="12" y="11" textAnchor="middle" fontFamily="Liberation Serif" fontSize={kind === 'UNDO' ? 8 : 11}>{kind}</text>}
    {kind === 'DEL' && <circle cx="12" cy="17" r="3" fill="#f11" stroke="#000" />}
    {kind === 'REF' && <circle cx="12" cy="17" r="3" fill="#1e1" stroke="#000" />}
    {kind === 'UNDO' && <path d="M8 13l3-2v1.500c6 0 7 9 0 9.500v-2c3-1 3-5 0-5.500V16z" fill="#ff4" stroke="#000" strokeWidth="0.700" />}
  </svg>
);
const Align = ({ y, side }: { y: number; side?: string }) => (
  <svg width="14" height="14" viewBox="0 0 14 14" stroke="#111">
    {[0, 1, 2].concat(side ? [3, 4] : []).map(i => {
      const short = i % 2 === 1;
      const x1 = short ? (side === 'r' ? 5 : side === 'l' ? 0 : 2) : 0;
      const x2 = short ? (side === 'l' ? 9 : side === 'r' ? 14 : 12) : 14;
      return <path key={i} d={`M${x1} ${y + i * 2.5}H${x2}`} strokeWidth="1.400" />;
    })}
  </svg>
);
const Indent = ({ right }: { right?: boolean }) => (
  <svg width="18" height="14" viewBox="0 0 18 14"><path d="M7 1.500h9M9 4.500h8M9 7.500h5M9 10.500h8M7 13h6" stroke="#111" strokeWidth="1.300" /><path d={right ? 'M0 7h6M3 4l3 3-3 3' : 'M6 7H0M3 4L0 7l3 3'} stroke="#2f62c0" fill="none" strokeWidth="1.400" /></svg>
);
const Launcher = () => (
  <svg width="8" height="8" viewBox="0 0 8 8"><path d="M0.500 6V0.500H6M3 3l4 4M7.500 3.500v4h-4" fill="none" stroke="#6b8fc0" /></svg>
);
const TableIcon = ({ kind }: { kind: number }) => (
  <svg width="30" height="29" viewBox="0 0 30 29">
    <path d="M0.500 0.500h27v24h-27z" fill="#fff" stroke="#7f98bd" />
    {kind === 0 && <path d="M7 1h7v5H7zM7 12h7v6H7z" fill="#ea4b35" />}
    {kind === 0 && <path d="M7 6h12v6H7zM7 18h5v6H7z" fill="#5a8bea" />}
    {kind === 1 && <path d="M7 6h20v18H7z" fill="#9dbdf3" />}
    {kind === 2 && <path d="M5 5h19v14H5z" fill="#8db4f8" />}
    <path d={kind === 2 ? 'M5 0v25M24 0v25M0 5h28M0 19h28' : 'M7 0v25M14 0v25M21 0v25M0 6h28M0 12h28M0 18h28'} stroke="#7f98bd" fill="none" />
    {kind === 0 ? <g><rect x="15" y="15" width="14" height="13" fill="#fff" stroke="#444" /><path d="M22 17l-4 2 4 2M18 23h4M18 25h4M23 18h4M23 20h4M23 22l4 2-4 2" stroke="#000" fill="none" /></g>
      : <g><path d="M29 1L19 18l3 3L30 5z" fill="#bfa47a" stroke="#666" strokeWidth="0.600" /><path d="M19 18l3 3c-2 5-7 6-12 6 3-2 4-7 9-9z" fill="#4a7fc4" /></g>}
  </svg>
);
const PasteIcon = () => (
  <svg width="28" height="31" viewBox="0 0 28 31">
    <rect x="1" y="2" width="23" height="26" rx="1" fill="#f3bd55" stroke="#c38b2e" />
    <path d="M7 2h3a3 3 0 016 0h3v4H7z" fill="#c9ced6" stroke="#777" />
    <path d="M10 12h12l5 5v13H10z" fill="#fff" stroke="#8b9bb5" /><path d="M12 17h8M12 20h12M12 23h12M12 26h12" stroke="#b8c6dc" />
  </svg>
);
const OfficeOrb = () => (
  <svg width="38" height="38" viewBox="0 0 38 38">
    <defs><radialGradient id="orb"><stop offset="0.200" stopColor="#fff" /><stop offset="0.800" stopColor="#d3dbe7" /><stop offset="1" stopColor="#9aa8bd" /></radialGradient></defs>
    <circle cx="19" cy="19" r="18" fill="url(#orb)" stroke="#8494ab" />
    <g fill="none" strokeWidth="3">
      <path d="M18 18h-8v-9h9v6" stroke="#dd4b1a" /><path d="M22 17v-4h7v6h-5" stroke="#3b82d8" strokeWidth="2.200" />
      <path d="M18 20v9h-6v-7h4" stroke="#f5b11a" strokeWidth="2.600" /><path d="M21 22h8v8h-8v-5" stroke="#5ba63a" strokeWidth="2.400" />
    </g>
  </svg>
);
const Glyph = ({ kind }: { kind: string }) => (
  <svg width="16" height="16" viewBox="0 0 16 16">
    {kind === 'save' && <g><path d="M1.500 1.500h13v13h-13z" fill="#4a5fc4" stroke="#2d3a86" /><path d="M4 2h8v6H4z" fill="#eef" /><path d="M5 10h6v4H5z" fill="#222c5c" /><path d="M9 11h1.500v2H9z" fill="#fff" /></g>}
    {kind === 'undo' && <path d="M4 3v5h5M4 8c3-5 10-4 9 1-.5 3-3 4-4 5" fill="none" stroke="#3d70c9" strokeWidth="2.400" />}
    {kind === 'redo' && <path d="M12 3v5H7M12 8c-3-5-10-4-9 1 .5 3 3 4 4 5" fill="none" stroke="#b4bfcd" strokeWidth="2.400" />}
    {kind === 'cut' && <g fill="none" stroke="#6b7f9f" strokeWidth="1.600"><path d="M5 1l5 9M11 1L6 10" /><circle cx="5" cy="12.500" r="2" stroke="#2f5fb5" /><circle cx="11" cy="12.500" r="2" stroke="#2f5fb5" /></g>}
    {kind === 'copy' && <g fill="#fff" stroke="#4a6fb0"><path d="M1.500 2.500h6l2 2v7h-8z" /><path d="M6.500 5.500h6l2 2v7h-8z" /><path d="M8 9h5M8 11h5M3 5h3" /></g>}
    {kind === 'brush' && <g><path d="M1 9l6-4 5 5-5 5z" fill="#f0cf62" stroke="#a98b2c" /><path d="M8 6l5-5 2 2-4 6z" fill="#555" /></g>}
    {kind === 'border' && <g stroke="#555" fill="none"><path d="M1.500 1.500h13v11M1.500 1.500v12M8 2v12M2 7.500h13" strokeDasharray="1 1" /><path d="M1 14.500h14" stroke="#000" strokeWidth="1.500" /></g>}
    {kind === 'fill' && <g><path d="M3 7l5-5 5 5-5 4z" fill="#eef" stroke="#444" /><path d="M13 6c2 1 2 3 1 5" stroke="#2f62c0" strokeWidth="2" fill="none" /><path d="M0 12.500h16v3H0z" fill="#fff200" /></g>}
    {kind === 'color' && <g><path d="M4 10L8 1l4 9M5.500 7h5" stroke="#2d4b86" strokeWidth="2" fill="none" /><path d="M0 12.500h16v3H0z" fill="#e11" /></g>}
    {kind === 'money' && <g><rect x="0.500" y="0.500" width="15" height="8" fill="#4a6fc0" stroke="#24407f" /><circle cx="8" cy="4.500" r="2" fill="#cfe0fa" /><ellipse cx="12" cy="10" rx="3.500" ry="2" fill="#f5c52c" stroke="#a77d10" /><ellipse cx="12" cy="13" rx="3.500" ry="2" fill="#f5c52c" stroke="#a77d10" /><ellipse cx="5" cy="14" rx="3.500" ry="1.600" fill="#f5c52c" stroke="#a77d10" /></g>}
    {kind === 'wrap' && <g fill="#fff" stroke="#777"><path d="M0.500 1.500h11v3h-11zM0.500 7.500h8v7h-8z" /><path d="M2 9.500h5M2 12h5M12 3h3v6l-3 1" fill="none" stroke="#444" /></g>}
    {kind === 'merge' && <g fill="#fff" stroke="#777"><path d="M0.500 1.500h15v13h-15zM8 1v4M8 11v4M0 5.500h16M0 10.500h16" /><path d="M1 8h4M11 8h4M7 9.500l1-3 1 3" stroke="#000" fill="none" /></g>}
    {kind === 'slant' && <g><text x="0" y="11" fontFamily="Liberation Serif" fontWeight="bold" fontSize="10" transform="rotate(-30 6 9)">ab</text><path d="M4 15L14 7M14 7h-4M14 7v4" stroke="#444" fill="none" /></g>}
    {kind === 'shield' && <g><path d="M8 1c3 2 5 2 6.500 2 .5 6-2 10-6.500 12.500C3.500 13 1 9 1.500 3 3 3 5 3 8 1z" fill="#f9a11b" stroke="#8a6a4a" /><path d="M8 3c2 1 3 1.500 5 1.500V8H3V4.500C5 4.500 6 4 8 3z" fill="#ffd45c" /></g>}
  </svg>
);

/* ---------- windows ---------- */
const WindowTitle = ({ text }: { text: string }) => (
  <FloatTitle><AppIcon /><h2>{text}</h2><WinButton aria-label={`Close ${text}`}><Cross /></WinButton></FloatTitle>
);

const ResultsViewer = () => (
  <Floating $x={80} $y={432} $w={495} $z={3}>
    <WindowTitle text="Results viewer" />
    <Viewer>
      <ViewerTitle><div>Signal Layer Checks</div></ViewerTitle>
      <Panes>
        <Pane>
          <PaneHead>
            <MotifButton $w={48} $h={28} $look="italic">None</MotifButton>
            <LayersLabel>Layers</LayersLabel>
            <MotifButton $w={40} $h={28} $look="italic">All</MotifButton>
          </PaneHead>
          <ListArea>
            <List $h={426}><Item $on>cs</Item><Item $on>ss</Item></List>
            <VScroll />
          </ListArea>
          <HScroll />
          <Framed>
            <SelectFrame $w={161}><select aria-label="Layer list mode"><option>Replace layers</option></select></SelectFrame>
          </Framed>
        </Pane>
        <Pane>
          <PaneHead>
            <MotifButton $h={30} $look="italic bold">Categories (22)</MotifButton>
            <MeasLabel>Meas:<SelectFrame $w={60}><select aria-label="Measure"><option>All</option></select></SelectFrame></MeasLabel>
          </PaneHead>
          <ListArea>
            <List $h={364}>{categories.map(c => <Item key={c} $on={c.startsWith('Shaved')}>{c}</Item>)}</List>
            <VScroll rest={50} />
          </ListArea>
          <HScroll />
          <Row $gap={4} $h={27}>
            <MotifButton $w={54}>First</MotifButton>
            <MotifButton $w={44}>&lt;---</MotifButton>
            <MotifButton $w={44}>---&gt;</MotifButton>
            <MotifButton $w={44}>Last</MotifButton>
            <TextLabel>Index:<IndexInput defaultValue="3105" /></TextLabel>
          </Row>
          <Row $h={33}>
            <Framed><SelectFrame $w={116}><select aria-label="Zoom"><option>Auto Zoom</option></select></SelectFrame></Framed>
            <Framed $green><SvLabel>Sv:</SvLabel><SelectFrame $w={60} $green><select aria-label="Severity"><option /></select></SelectFrame></Framed>
            <Spacer />
            <TextLabel><SmallCheck type="checkbox" />Show All</TextLabel>
            <Spacer />
          </Row>
          <KeyRow $gap={4} $h={33}>
            <Spacer />
            {['DEL', 'REF', 'UNDO'].map(k => <IconKey key={k} $w={k === 'UNDO' ? 34 : 30} aria-label={k}><KeyIcon kind={k} /></IconKey>)}
          </KeyRow>
        </Pane>
      </Panes>
      <StatusLine>cs 6.135mil</StatusLine>
      <Prompt>ERF--&gt;</Prompt>
      <ViewerFoot>
        <MotifButton $h={30}>Close</MotifButton>
        {['man', 'stop', 'noref', 'num', 'note', 'bars'].map(k => <IconKey key={k} $w={29} aria-label={k} $alert={k === 'bars'}><KeyIcon kind={k} /></IconKey>)}
      </ViewerFoot>
    </Viewer>
  </Floating>
);

const Checklist = () => (
  <Floating $x={1656} $y={80} $w={384}>
    <WindowTitle text="Checklist Editor" />
    <CheckMenu><nav>{['File', 'Edit', 'Run'].map(m => <MenuItem $large key={m}><Hot text={m} at={0} /></MenuItem>)}</nav></CheckMenu>
    <CheckName>fp−checklist</CheckName>
    <CheckBody>
      <Checks>
        {checks.map((c, i) => (
          <Check key={i}>
            <CheckHead>
              <CheckLabel><Tick type="checkbox" defaultChecked /><CheckIcon ground={c.ground} />{c.name}</CheckLabel>
              <MotifButton $w={44} $h={30} $look="normal">ERF:</MotifButton>
              <CheckInput aria-label="ERF model" defaultValue={c.erf} />
              <MotifButton $w={30} $h={30} aria-label="Help"><Question /></MotifButton>
            </CheckHead>
            <Row $gap={4} $h={31}>
              {['Parameters...', 'Ranges...', 'Online...'].map(b => <SerifButton key={b}>{b}</SerifButton>)}
            </Row>
            <Row $gap={4} $h={32}>
              {[0, 1, 2].map(k => <IconKey key={k} $mint aria-label={`Run ${k + 1}`}><Runner kind={k} /></IconKey>)}
              <CheckTime>07 Feb 2023<br />03:38 PM - 0:00:05</CheckTime>
              <Spacer />
              <IconKey $mint aria-label="View results"><Magnifier /></IconKey>
              <Flag $bad={c.bad}>{c.bad ? '!!' : ''}</Flag>
            </Row>
            <Message>{c.msg}</Message>
          </Check>
        ))}
      </Checks>
      <VScroll rest={330} />
    </CheckBody>
  </Floating>
);

const Measure = () => (
  <Floating $x={1864} $y={246} $w={184} $z={3}>
    <WindowTitle text="Measure Popup" />
    <Modes>
      <ModeTitle>Measure Mode</ModeTitle>
      {modes.map((m, i) => <Radio key={m} $h={27} $line><Diamond type="radio" name="mode" defaultChecked={i === 0} />{m}</Radio>)}
    </Modes>
    <MeasureFoot><MotifButton>Close</MotifButton></MeasureFoot>
  </Floating>
);

const Histogram = () => (
  <Floating $x={1400} $y={426} $w={464} $z={2}>
    <WindowTitle text="Results histogram" />
    <HistBody>
      <div>
        <HistModes>
          {['Count', 'Average', 'Sum', 'Min', 'Max'].map(m => <Radio key={m} $h={27}><Diamond type="radio" name="stat" defaultChecked={m === 'Min'} />{m}</Radio>)}
        </HistModes>
        <ShapeList><b>Shape</b><VScroll aqua /></ShapeList>
      </div>
      <Chart>
        <ChartTitle>Size(Shape) / Min(Shape)</ChartTitle>
        <Bars>{bars.map(([label, h]) => <Bar key={label} $low={label === '6.135'}>{label}<i style={{ height: h }} /></Bar>)}</Bars>
      </Chart>
    </HistBody>
  </Floating>
);

const Foot = ({ text, plain }: { text: string; plain?: boolean }) => <GroupLabel><span>{text}</span>{!plain && <Launcher />}</GroupLabel>;

const Spreadsheet = () => (
  <Excel>
    <ExcelTitle>
      <Quick><Glyph kind="save" /><Glyph kind="undo" /><Caret /><Glyph kind="redo" /><Caret /></Quick>
      <Caret />
      <h2>2D0TR003A0-预审指示  [兼容模式] - Microsoft Excel</h2>
    </ExcelTitle>
    <Orb aria-label="Office"><OfficeOrb /></Orb>
    <Tabs>{['开始', '插入', '页面布局', '公式', '数据', '审阅', '视图'].map((t, i) => <Tab key={t} $on={i === 0}>{t}</Tab>)}</Tabs>
    <Ribbon>
      <Group $w={111}>
        <GroupBody $gap={3}>
          <BigButton $w={42}><PasteIcon />粘贴<Caret /></BigButton>
          <Lines>
            <LineButton><Glyph kind="cut" />剪切</LineButton>
            <LineButton><Glyph kind="copy" />复制</LineButton>
            <LineButton><Glyph kind="brush" />格式刷</LineButton>
          </Lines>
        </GroupBody>
        <Foot text="剪贴板" />
      </Group>
      <Group $w={233}>
        <GroupBody $column $gap={10}>
          <Row>
            <Combo $w={131}><select aria-label="字体"><option>宋体</option></select><Caret /></Combo>
            <Combo $w={47}><select aria-label="字号"><option>10</option></select><Caret /></Combo>
            <Spacer />
            <Cluster><Tool $w={22} $face={`bold 16px/18px ${serif}`}>A<sup>ˆ</sup></Tool><Tool $w={21} $face={`bold 12px/18px ${serif}`}>A<sup>ˇ</sup></Tool></Cluster>
          </Row>
          <Row $gap={4}>
            <Cluster>
              <Tool $w={22} $on $face={`bold 14px/18px ${serif}`}>B</Tool>
              <Tool $w={23} $face={`italic bold 14px/18px ${serif}`}>I</Tool>
              <Tool $w={33} $face={`bold 14px/18px ${serif}`}><u>U</u><Caret /></Tool>
            </Cluster>
            <Cluster><Tool $w={32}><Glyph kind="border" /><Caret /></Tool></Cluster>
            <Cluster><Tool $w={32}><Glyph kind="fill" /><Caret /></Tool><Tool $w={33}><Glyph kind="color" /><Caret /></Tool></Cluster>
            <Cluster><Tool $w={33}><Pinyin>wén<b>文</b></Pinyin><Caret /></Tool></Cluster>
          </Row>
        </GroupBody>
        <Foot text="字体" />
      </Group>
      <Group $w={229}>
        <GroupBody>
          <Stack>
            <Row $gap={3}>
              <Cluster><Tool $w={22}><Align y={2} /></Tool><Tool $w={23} $on><Align y={5} /></Tool><Tool $w={22}><Align y={8} /></Tool></Cluster>
              <Cluster><Tool $w={30}><Glyph kind="slant" /><Caret /></Tool></Cluster>
            </Row>
            <Row $gap={3}>
              <Cluster><Tool $w={22} $on><Align y={2} side="l" /></Tool><Tool $w={23}><Align y={2} side="c" /></Tool><Tool $w={22}><Align y={2} side="r" /></Tool></Cluster>
              <Cluster><Tool $w={21}><Indent /></Tool><Tool $w={21}><Indent right /></Tool></Cluster>
            </Row>
          </Stack>
          <Row><Divider /></Row>
          <Stack>
            <Row><Cluster><Tool $w={72} $on><Glyph kind="wrap" />自动换行</Tool></Cluster></Row>
            <Row><Cluster><Tool $w={82} $on><Glyph kind="merge" />合并后居中</Tool><Tool $w={12} $on><Caret /></Tool></Cluster></Row>
          </Stack>
        </GroupBody>
        <Foot text="对齐方式" />
      </Group>
      <Group $w={136}>
        <GroupBody $column $gap={10}>
          <Row><Combo $w={128}><select aria-label="数字格式"><option>常规</option></select><Caret /></Combo></Row>
          <Row $gap={4}>
            <Cluster><Tool $w={32}><Glyph kind="money" /><Caret /></Tool><Tool $w={23}>%</Tool><Tool $w={22} $face={`bold 18px/10px ${serif}`}>,</Tool></Cluster>
            <Cluster>
              <Tool $w={21} $face={`bold 8px/8px ${ui}`}>←.0<br />.00</Tool>
              <Tool $w={21} $face={`bold 8px/8px ${ui}`}>.00<br />→.0</Tool>
            </Cluster>
          </Row>
        </GroupBody>
        <Foot text="数字" />
      </Group>
      <Group $w={165}>
        <GroupBody>
          <BigButton $w={50}><TableIcon kind={0} />条件格式<Caret /></BigButton>
          <BigButton $w={62}><TableIcon kind={1} />套用<Row>表格格式<Caret /></Row></BigButton>
          <BigButton $w={44}><TableIcon kind={2} />单元格<Row>样式<Caret /></Row></BigButton>
        </GroupBody>
        <Foot text="样式" plain />
      </Group>
      <Group $w={80}>
        <GroupBody>
          <BigButton $w={36}>
            <svg width="28" height="28" viewBox="0 0 28 28"><path d="M1 1h16v5H1zM9 1v5M1 16h16v10H1zM9 16v10M1 21h16" fill="#fff" stroke="#7f98bd" /><path d="M14 8h12v6H14z" fill="#7fa8ee" stroke="#4a74bd" /><path d="M12 11H6M8 9l-2 2 2 2" stroke="#333" fill="none" /></svg>
            插入<Caret />
          </BigButton>
        </GroupBody>
        <Foot text="" plain />
      </Group>
    </Ribbon>
    <Security><Glyph kind="shield" /><b>安全警告</b><span>部分活动内容已被禁用。</span><button>选项...</button></Security>
    <Formula>
      <label><input aria-label="Name box" defaultValue="C9" /><Caret $dark /></label>
      <FxPill>fx</FxPill>
      <FormulaInput aria-label="Formula" defaultValue={sample} />
    </Formula>
    <SheetArea>
      <Sheet>
        <thead>
          <tr><ColHead $w={34} $corner />{columns.map(([c, w], i) => <ColHead key={c} $w={w} $on={i > 1}>{c}</ColHead>)}</tr>
        </thead>
        <tbody>
          <tr><RowHead $h={45}>7</RowHead><Cell colSpan={2} $kind="head">{'工艺流程\n指示'}</Cell><Cell colSpan={7} /></tr>
          {sheetRows.map((r, i) => (
            <tr key={r.n}>
              <RowHead $h={r.h} $on={r.active}>{r.n}</RowHead>
              {i === 0 && <Cell rowSpan={4} />}
              <Cell $kind="num">{r.k}</Cell>
              <Cell colSpan={7} $kind="text" $red={r.red} $active={r.active}>{r.text}</Cell>
            </tr>
          ))}
        </tbody>
      </Sheet>
      <RedArrow width="30" height="106" viewBox="0 0 30 106"><path d="M5 2L17 80" stroke="#f00" strokeWidth="5" /><path d="M9 77L26 75L20 105z" fill="#f00" /></RedArrow>
    </SheetArea>
  </Excel>
);

export default function App() {
  return (
    <Desktop>
      <Global />
      <MainWindow>
        <MainTitle>
          <AppIcon />
          <span>Graphic Editor 9.07b2 (00@HY-HYCAM-PC064 - Windows, pid:10496)</span>
          <Spacer />
          <WinControls>
            <WinButton aria-label="Minimize"><svg width="12" height="12"><path d="M1 6.500h10" stroke="#888" /></svg></WinButton>
            <WinButton aria-label="Maximize"><svg width="12" height="12"><path d="M1.500 1.500h9v9h-9z" stroke="#888" fill="none" /></svg></WinButton>
            <WinButton aria-label="Close"><Cross /></WinButton>
          </WinControls>
        </MainTitle>
        <TopRow>
          <MenuBar>
            {menus.map(([m, at]) => <MenuItem key={m}><Hot text={m} at={at} /></MenuItem>)}
            <Spacer />
            <MenuItem>Help</MenuItem>
          </MenuBar>
          <Brand>
            <Frontline />
            <Product><h1>Genesis 2000</h1><p>Graphic Editor</p></Product>
            <Clock>07 Feb 2023<br />03:37 PM<svg width="12" height="9"><path d="M0 0h4v9H0zM7 0h4v9H7z" fill="#f01010" /></svg></Clock>
          </Brand>
        </TopRow>
        <Work>
          <Sidebar>
            <JobLine>Job : 2d0tr003a0</JobLine>
            <JobLine>Step: cam</JobLine>
            <MatrixBox><MatrixButton>Job Matrix ...</MatrixButton></MatrixBox>
            <LayerPanel>
              {layerGroups.map((g, i) => (
                <LayerGroup key={i}>
                  {g.map((l, j) => (
                    <LayerRow key={j} $color={l.color || C.aqua}>
                      <LayerCheck type="checkbox" $active={l.active} />
                      <LayerSwatch $active={l.active}>{l.active && <Cursor />}</LayerSwatch>
                      <span>{l.name}{l.mark === 'hand' && <Hand />}{l.mark === 'grid' && <GridMark />}</span>
                    </LayerRow>
                  ))}
                </LayerGroup>
              ))}
            </LayerPanel>
            <Selected>Selected</Selected>
          </Sidebar>
          <Board />
          <ToolStrip>
            {[0, 1, 2, 3, 4, 5, 6, 7, 8, 9].map(i => (
              <StripButton key={i} $alert={i === 3} aria-label={`Tool ${i + 1}`}>
                <svg width="26" height="28" viewBox="0 0 26 28"><rect x="0.500" y="0.500" width="25" height="27" fill="none" stroke="#000" /><path d="M20 6l4 4-4 4M20 20h4" stroke="#000" fill="none" /></svg>
              </StripButton>
            ))}
          </ToolStrip>
        </Work>
        <CommandBar>
          <CornerButton aria-label="Distance"><svg width="20" height="21" viewBox="0 0 20 21"><path d="M0.500 0.500h19v20h-19zM4 5l11 11M4 9V5h4M15 12v4h-4" fill="none" stroke="#000" /></svg></CornerButton>
          <CornerButton aria-label="Angle"><svg width="20" height="21" viewBox="0 0 20 21"><path d="M0.500 0.500h19v20h-19zM3 18L16 4M5 15h5M12 14a2 2 0 110 3 2 2 0 010-3M17 14l-3 3M5 4v4h2" fill="none" stroke="#000" /></svg></CornerButton>
          <CommandText>:o</CommandText>
        </CommandBar>
        <StatusBar />
      </MainWindow>
      <Checklist />
      <Histogram />
      <Measure />
      <ResultsViewer />
      <Spreadsheet />
    </Desktop>
  );
}
